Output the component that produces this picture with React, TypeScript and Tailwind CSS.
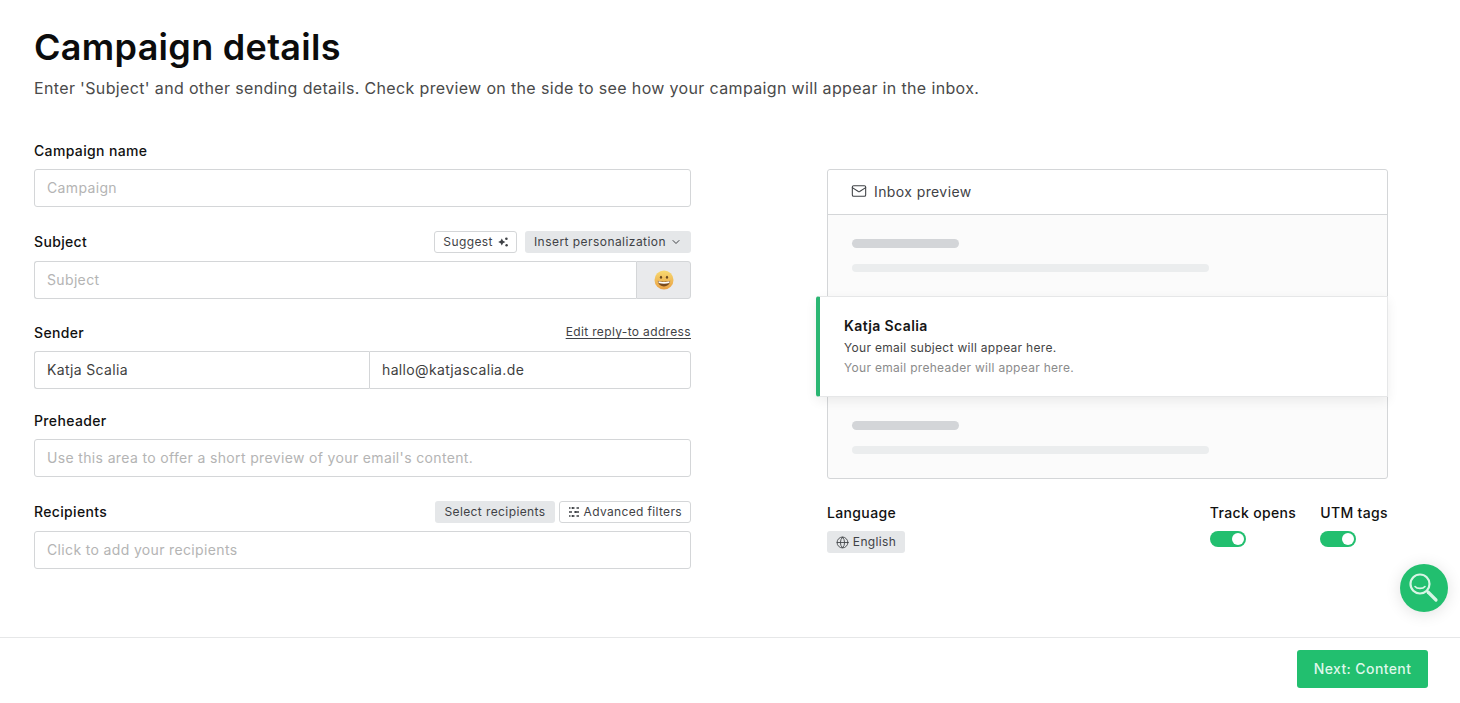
import { ChevronDown, Globe, Mail } from "lucide-react";

const font = { fontFamily: "Inter, 'Noto Sans', sans-serif" };

const inputClass =
  "h-[38px] rounded-[3px] border border-[#d4d6d8] bg-white px-3 pb-[2px] text-[14px] tracking-[0.35px] text-[#3f3f3f] outline-none placeholder:text-[#b4b4b4]";

const labelClass = "text-[14px] font-medium tracking-[0.35px]";

function Sparkle() {
  return (
    <svg width="12" height="12" viewBox="0 0 12 12" fill="#3f4246">
      <path d="M4.8 2.4 L6 4.8 L8.4 6 L6 7.2 L4.8 9.6 L3.6 7.2 L1.2 6 L3.6 4.8 Z" />
      <circle cx="9.4" cy="2.8" r="1.3" />
      <circle cx="9.6" cy="9.2" r="1.2" />
    </svg>
  );
}

function FilterIcon() {
  return (
    <svg width="12" height="12" viewBox="0 0 12 12" fill="none" stroke="#3f4246" strokeWidth="1.3">
      <path d="M1 2h1.5M4 2h2.5M8.5 2h2.5M1 6h3M6 6h.5M8 6h3M1 10h1.5M4 10h2.5M8.5 10h2.5" />
      <path d="M4.5 1v2M7.5 5v2M4.5 9v2" strokeWidth="1.6" />
    </svg>
  );
}

function Grin() {
  return (
    <svg width="20" height="20" viewBox="0 0 20 20">
      <defs>
        <linearGradient id="face" x1="0" y1="0" x2="0" y2="1">
          <stop offset="0" stopColor="#f8da70" />
          <stop offset="1" stopColor="#e9a044" />
        </linearGradient>
      </defs>
      <circle cx="10" cy="10" r="9.5" fill="url(#face)" />
      <ellipse cx="7" cy="7.2" rx="1.1" ry="1.5" fill="#6b4a1e" />
      <ellipse cx="13" cy="7.2" rx="1.1" ry="1.5" fill="#6b4a1e" />
      <path d="M3.8 10.8 C7 12 13 12 16.2 10.8 C15.8 14.6 13 16.4 10 16.4 C7 16.4 4.2 14.6 3.8 10.8 Z" fill="#7a4a1c" />
      <path d="M4.4 11.2 C7.4 12.2 12.6 12.2 15.6 11.2 L15.3 13 C12.4 13.9 7.6 13.9 4.7 13 Z" fill="#ffffff" />
    </svg>
  );
}

function Toggle() {
  return (
    <div className="flex h-4 w-9 items-center justify-end rounded-full bg-[#22bf6f] pr-[2px]">
      <div className="h-3 w-3 rounded-full bg-white" />
    </div>
  );
}

function SkeletonRow({ className }: { className: string }) {
  return (
    <div className={`flex flex-col px-6 ${className}`}>
      <div className="h-[9px] w-[107px] rounded-full bg-[#d3d5d8]" />
      <div className="mt-4 h-2 w-[357px] rounded-full bg-[#ebedee]" />
    </div>
  );
}

export default function App() {
  return (
    <div style={font} className="relative flex h-[703px] w-[1460px] flex-col overflow-hidden bg-white text-[#111]">
      <main className="flex-1 px-[34px] pt-[24px]">
        <h1 className="text-[36px] font-semibold leading-[46px] tracking-[0.3px] text-[#0c0c0c]">Campaign details</h1>
        <p className="mt-[7px] text-[16px] leading-[22px] tracking-[0.35px] text-[#4a4a4a]">
          Enter 'Subject' and other sending details. Check preview on the side to see how your campaign will appear in the inbox.
        </p>

        <div className="mt-10 flex items-start justify-between pr-[38px]">
          <form className="w-[657px]">
            <div className={`mb-2 flex h-[22px] items-center ${labelClass}`}>Campaign name</div>
            <input className={`${inputClass} w-full`} placeholder="Campaign" />

            <div className="mb-2 mt-6 flex h-[22px] items-center justify-between">
              <span className={`pb-[2px] ${labelClass}`}>Subject</span>
              <div className="flex gap-2 text-[12px] text-[#3f4246]">
                <span className="flex h-[22px] items-center gap-1 rounded-[3px] border border-[#d4d6d8] pl-2 pr-[7px] tracking-[0.4px]">
                  Suggest <Sparkle />
                </span>
                <span className="flex h-[22px] items-center gap-1 rounded-[3px] bg-[#e5e7e9] px-[9px] tracking-[0.45px]">
                  Insert personalization <ChevronDown size={12} />
                </span>
              </div>
            </div>
            <div className="flex">
              <input className={`${inputClass} min-w-0 flex-1 rounded-r-none border-r-0`} placeholder="Subject" />
              <div className="flex h-[38px] w-[55px] shrink-0 items-center justify-center rounded-r-[3px] border border-[#d4d6d8] bg-[#e9eaec]">
                <Grin />
              </div>
            </div>

            <div className="mb-[7px] mt-[23px] flex h-[22px] items-center justify-between">
              <span className={`pb-[2px] ${labelClass}`}>Sender</span>
              <span className="pb-[2px] text-[12px] tracking-[0.35px] text-[#3f4246] underline underline-offset-2">Edit reply-to address</span>
            </div>
            <div className="flex">
              <input className={`${inputClass} w-[335px] shrink-0 rounded-r-none border-r-0`} defaultValue="Katja Scalia" />
              <input className={`${inputClass} min-w-0 flex-1 rounded-l-none`} defaultValue="hallo@katjascalia.de" />
            </div>

            <div className={`mb-[7px] mt-[21px] flex h-[22px] items-center pb-[2px] ${labelClass}`}>Preheader</div>
            <input className={`${inputClass} w-full`} placeholder="Use this area to offer a short preview of your email's content." />

            <div className="mb-2 mt-6 flex h-[22px] items-center justify-between">
              <span className={`pb-[2px] ${labelClass}`}>Recipients</span>
              <div className="flex gap-1 text-[12px] text-[#3f4246]">
                <span className="flex h-[22px] items-center rounded-[3px] bg-[#e5e7e9] px-[9px] tracking-[0.4px]">Select recipients</span>
                <span className="flex h-[22px] items-center gap-1 rounded-[3px] border border-[#d4d6d8] px-2 tracking-[0.35px]">
                  <FilterIcon /> Advanced filters
                </span>
              </div>
            </div>
            <input className={`${inputClass} w-full`} placeholder="Click to add your recipients" />
          </form>

          <aside className="mt-[30px] w-[561px]">
            <div className="h-[310px] rounded-[3px] border border-[#d4d6d8] bg-[#fbfbfb]">
              <div className="flex h-[45px] items-center gap-[7px] rounded-t-[3px] border-b border-[#d4d6d8] bg-white px-6 pb-[2px] text-[14px] tracking-[0.4px] text-[#3f4246]">
                <Mail size={16} strokeWidth={1.6} className="-ml-px" />
                Inbox preview
              </div>
              <SkeletonRow className="h-[81px] pt-6" />
              <div className="-ml-3 -mr-px flex h-[101px] flex-col rounded-l-[3px] border-y border-r border-[#e6e7e8] border-l-4 border-l-[#2bb673] bg-white pl-6 pt-[19px] shadow-[0_4px_12px_rgba(0,0,0,0.07)]">
                <div className="text-[14px] font-semibold leading-5 tracking-[0.4px] text-[#151515]">Katja Scalia</div>
                <div className="mt-[3px] text-[12px] leading-[18px] tracking-[0.3px] text-[#444]">Your email subject will appear here.</div>
                <div className="mt-[2px] text-[12px] leading-[18px] tracking-[0.3px] text-[#8b8b8b]">Your email preheader will appear here.</div>
              </div>
              <SkeletonRow className="pt-6" />
            </div>

            <div className="mt-6 flex justify-between">
              <div>
                <div className={`leading-5 ${labelClass}`}>Language</div>
                <div className="mt-2 flex h-[22px] w-[78px] items-center justify-center gap-1 rounded-[3px] bg-[#e5e7e9] text-[12px] tracking-[0.35px] text-[#3f4246]">
                  <Globe size={13} strokeWidth={1.6} /> English
                </div>
              </div>
              <div className="flex gap-6">
                <div>
                  <div className={`leading-5 ${labelClass}`}>Track opens</div>
                  <div className="mt-2"><Toggle /></div>
                </div>
                <div>
                  <div className={`leading-5 ${labelClass}`}>UTM tags</div>
                  <div className="mt-2"><Toggle /></div>
                </div>
              </div>
            </div>
          </aside>
        </div>
      </main>

      <footer className="flex h-[66px] shrink-0 items-center justify-end border-t border-[#e6e7e8] pb-1 pr-8">
        <button className="h-[38px] w-[131px] rounded-[3px] bg-[#22bf6f] text-[14px] font-medium tracking-[0.4px] text-[#dff7ea]">
          Next: Content
        </button>
      </footer>

      {/* floating help button */}
      <button className="absolute left-[1400px] top-[564px] flex h-12 w-12 items-center justify-center rounded-full bg-[#22bf6f] shadow-[0_2px_16px_rgba(0,0,0,0.12)]">
        <svg width="30" height="30" viewBox="0 0 30 30" fill="none" stroke="#d8f5e5" strokeLinecap="round">
          <circle cx="11" cy="11" r="9.5" strokeWidth="2.2" />
          <path d="M6 13.5 C8 16 14 16 16 13.5" strokeWidth="1.6" />
          <path d="M19 19 L27 27" strokeWidth="3.2" />
        </svg>
      </button>
    </div>
  );
}
